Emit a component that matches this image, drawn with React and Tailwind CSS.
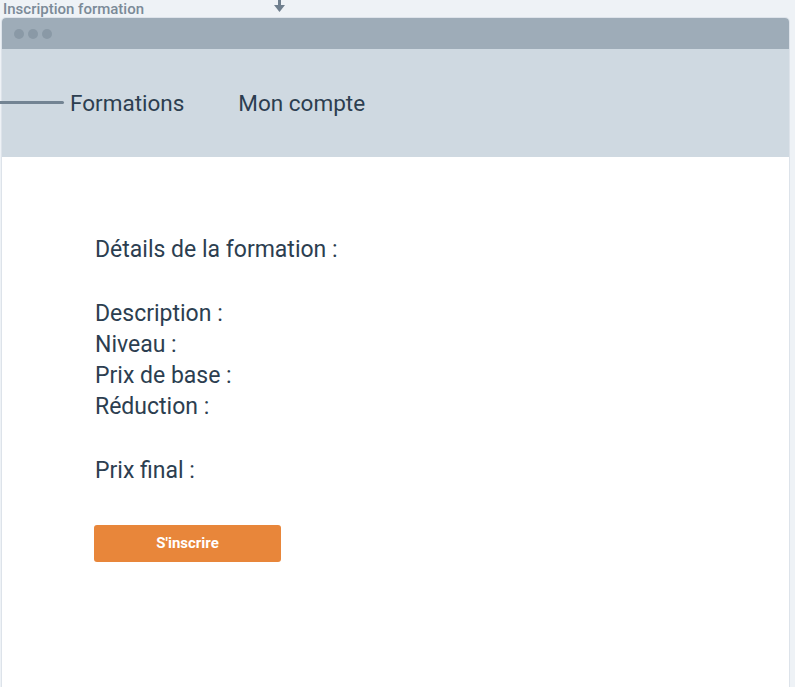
import React from "react";

const font = { fontFamily: "Roboto, 'Noto Sans', sans-serif" };

const Field = ({ children }) => (
  <p className="text-[23px] leading-[31px] text-[#2c3e50]">{children}</p>
);

const App = () => {
  return (
    <div className="h-[687px] w-[795px] overflow-hidden bg-[#eef2f6]" style={font}>
      <div className="relative h-[18px]">
        <span className="absolute left-[3px] top-0 text-[15px] font-medium leading-[18px] text-[#7b8a98]">
          Inscription formation
        </span>
        <svg className="absolute left-[273px] top-0" width="13" height="13" viewBox="0 0 13 13">
          <rect x="5" y="0" width="3" height="7" fill="#6f7f8e" />
          <path d="M1 5 L12 5 L6.5 12 Z" fill="#6f7f8e" />
        </svg>
      </div>

      <div className="ml-[2px] w-[787px] rounded-t-[4px] bg-white shadow-[0_0_0_1px_#dde3ea]">
        <div className="flex h-[31px] items-center gap-[4px] rounded-t-[4px] bg-[#9eacb8] pl-[12px]">
          <span className="h-[10px] w-[10px] rounded-full bg-[#8a99a6]" />
          <span className="h-[10px] w-[10px] rounded-full bg-[#8a99a6]" />
          <span className="h-[10px] w-[10px] rounded-full bg-[#8a99a6]" />
        </div>

        <div className="relative flex h-[108px] items-start bg-[#cfd9e1] pt-[40px]">
          <span className="absolute left-[-2px] top-[52px] h-[3px] w-[64px] rounded-r bg-[#738493]" />
          <nav className="ml-[68px] flex gap-[54px] text-[22.5px] leading-[28px] text-[#2c3e50]">
            <span>Formations</span>
            <span>Mon compte</span>
          </nav>
        </div>

        <div className="h-[530px] pl-[93px] pt-[77px]">
          <Field>Détails de la formation :</Field>
          <div className="h-[33px]" />
          <Field>Description :</Field>
          <Field>Niveau :</Field>
          <Field>Prix de base :</Field>
          <Field>Réduction :</Field>
          <div className="h-[33px]" />
          <Field>Prix final :</Field>

          <button
            type="button"
            className="-ml-px mt-[39px] h-[37px] w-[187px] rounded-[3px] bg-[#e8863a] text-[15px] font-bold text-white"
          >
            S'inscrire
          </button>
        </div>
      </div>
    </div>
  );
};

export default App;
